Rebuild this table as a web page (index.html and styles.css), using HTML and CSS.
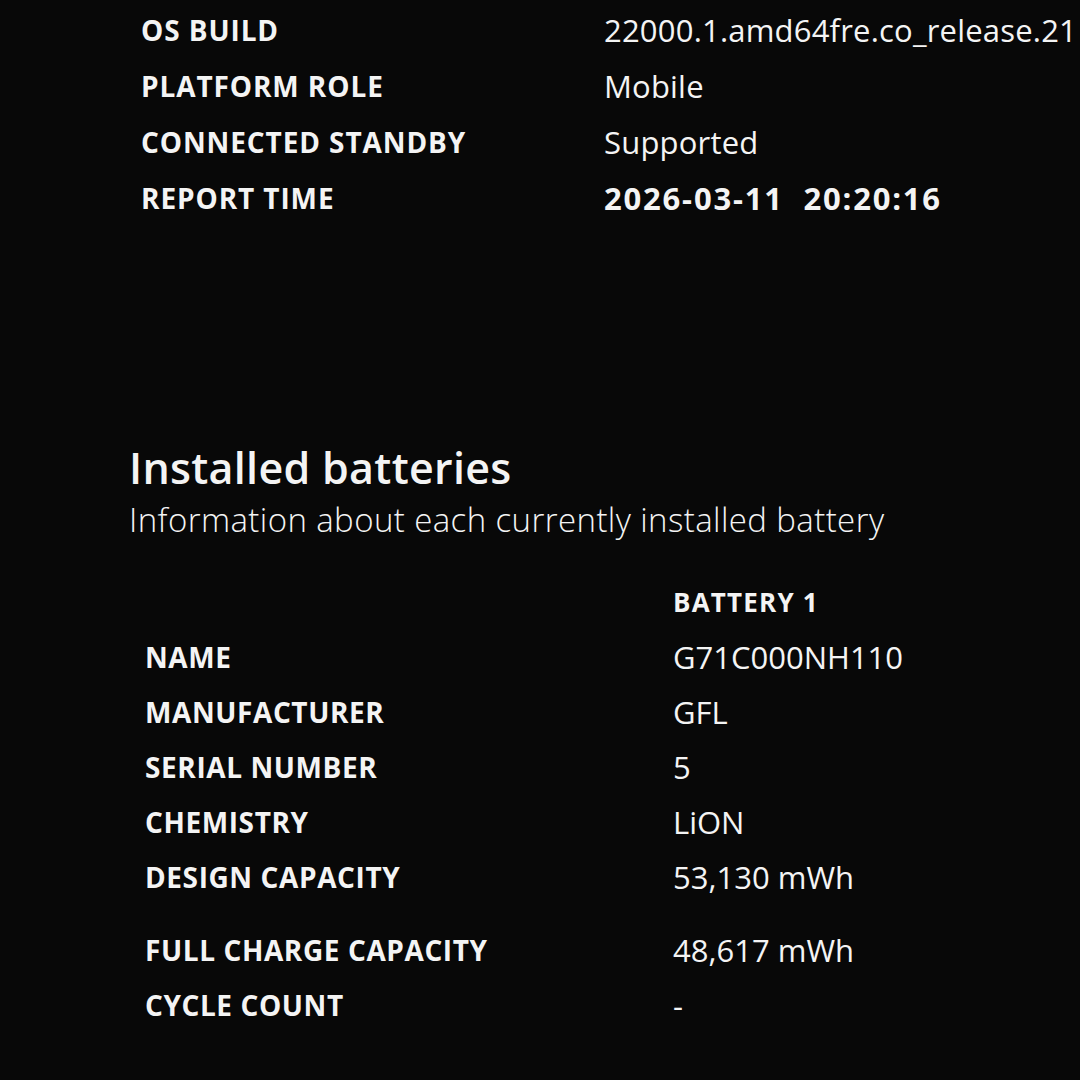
FILE: index.html
```html
<!DOCTYPE html>
<html lang="en">
<head>
    <meta charset="UTF-8">
    <title>Battery report</title>
    <link rel="stylesheet" href="styles.css">
</head>
<body>
    <div class="report">
        <div class="info">
            <div class="label">OS BUILD</div><div class="value">22000.1.amd64fre.co_release.21</div>
            <div class="label">PLATFORM ROLE</div><div class="value">Mobile</div>
            <div class="label">CONNECTED STANDBY</div><div class="value">Supported</div>
            <div class="label">REPORT TIME</div><div class="value strong">2026-03-11&nbsp;&nbsp;20:20:16</div>
        </div>

        <div class="section">
            <h2>Installed batteries</h2>
            <p class="sub">Information about each currently installed battery</p>
        </div>

        <div class="batteries">
            <div></div><div class="label head">BATTERY 1</div>
            <div class="label">NAME</div><div class="value">G71C000NH110</div>
            <div class="label">MANUFACTURER</div><div class="value">GFL</div>
            <div class="label">SERIAL NUMBER</div><div class="value">5</div>
            <div class="label">CHEMISTRY</div><div class="value">LiON</div>
            <div class="label">DESIGN CAPACITY</div><div class="value">53,130 mWh</div>
            <div class="label spaced">FULL CHARGE CAPACITY</div><div class="value spaced">48,617 mWh</div>
            <div class="label">CYCLE COUNT</div><div class="value">-</div>
        </div>
    </div>
</body>
</html>
```

FILE: styles.css
```css
body {
    margin: 0;
    background: #080808;
    color: #f4f4f4;
    font-family: "Open Sans", "Noto Sans", sans-serif;
    overflow: hidden;
    width: 1080px;
    height: 1080px;
}

.report {
    padding-top: 2px;
}

.info {
    display: grid;
    grid-template-columns: 463px 1fr;
    grid-auto-rows: 56px;
    align-items: center;
    margin-left: 141px;
    white-space: nowrap;
}

.info .label {
    font-size: 28px;
    font-weight: 700;
    letter-spacing: 0.9px;
}

.info .value {
    font-size: 31px;
    font-weight: 400;
    letter-spacing: 0.2px;
}

.info .value.strong {
    font-weight: 700;
    letter-spacing: 1.8px;
}

.section {
    margin-top: 214px;
    margin-left: 129px;
}

.section h2 {
    margin: 0;
    font-size: 43px;
    font-weight: 600;
    line-height: 56px;
    letter-spacing: 0.3px;
}

.section .sub {
    margin: 0;
    font-size: 33px;
    font-weight: 300;
    line-height: 48px;
    letter-spacing: 0.4px;
}

.batteries {
    display: grid;
    grid-template-columns: 528px 1fr;
    margin-left: 145px;
    margin-top: 31px;
    white-space: nowrap;
}

.batteries > div {
    line-height: 55px;
}

.batteries .label {
    font-size: 28px;
    font-weight: 700;
    letter-spacing: 0.6px;
}

.batteries .head {
    font-size: 26px;
    letter-spacing: 1.2px;
}

.batteries .value {
    font-size: 31px;
    font-weight: 400;
    letter-spacing: 0;
}

.batteries .spaced {
    padding-top: 18px;
}
```
